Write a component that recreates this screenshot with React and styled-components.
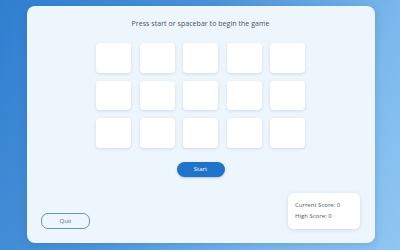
import React from "react";
import styled, { createGlobalStyle } from "styled-components";

const Global = createGlobalStyle`
  html, body { margin: 0; padding: 0; }
  body {
    width: 400px;
    height: 250px;
    overflow: hidden;
    font-family: "Open Sans", "Noto Sans", sans-serif;
    background: linear-gradient(120deg, #2f7fd0 0%, #4c93d8 40%, #7bb8ec 75%, #8fc7f3 100%);
  }
`;

const Page = styled.div`
  width: 400px;
  height: 250px;
  display: flex;
  align-items: flex-start;
  justify-content: center;
  padding-top: 6px;
  padding-left: 2px;
  box-sizing: border-box;
`;

const Card = styled.div`
  width: 348px;
  height: 237px;
  box-sizing: border-box;
  background: #edf5fd;
  border-radius: 8px;
  box-shadow: 0 2px 8px rgba(20, 60, 120, 0.18);
  display: flex;
  flex-direction: column;
  align-items: center;
  padding: 13px 15px 14px 14px;
`;

const Title = styled.div`
  font-size: 7px;
  line-height: 10px;
  color: #4a5361;
  letter-spacing: 0.05px;
`;

const Grid = styled.div`
  margin-top: 14px;
  display: grid;
  grid-template-columns: repeat(5, 35px);
  grid-auto-rows: 29.5px;
  column-gap: 8.5px;
  row-gap: 8px;
`;

const Tile = styled.div`
  background: #ffffff;
  border-radius: 4px;
  box-shadow: 0 1px 3px rgba(40, 70, 110, 0.14);
`;

const StartButton = styled.button`
  margin-top: 14px;
  width: 48px;
  height: 15px;
  border: none;
  border-radius: 8px;
  background: #1f74c9;
  color: #ffffff;
  font-family: inherit;
  font-size: 6px;
  padding: 0;
  box-shadow: 0 1px 2px rgba(20, 60, 120, 0.25);
`;

const Bottom = styled.div`
  margin-top: auto;
  align-self: stretch;
  display: flex;
  justify-content: space-between;
  align-items: flex-end;
`;

const QuitButton = styled.button`
  width: 49px;
  height: 16px;
  border: 1px solid #6d90bd;
  border-radius: 7px;
  background: transparent;
  color: #5d7190;
  font-family: inherit;
  font-size: 6px;
  padding: 0;
  box-sizing: border-box;
`;

const ScoreBox = styled.div`
  width: 72px;
  height: 36px;
  box-sizing: border-box;
  background: #ffffff;
  border-radius: 6px;
  box-shadow: 0 1px 4px rgba(40, 70, 110, 0.14);
  padding: 8px 7px;
  display: flex;
  flex-direction: column;
  gap: 3px;
`;

const ScoreLine = styled.div`
  font-size: 6px;
  line-height: 8px;
  color: #505866;
`;

export default function App() {
  return (
    <>
      <Global />
      <Page>
        <Card>
          <Title>Press start or spacebar to begin the game</Title>
          <Grid>
            {Array.from({ length: 15 }).map((_, i) => (
              <Tile key={i} />
            ))}
          </Grid>
          <StartButton>Start</StartButton>
          <Bottom>
            <QuitButton>Quit</QuitButton>
            <ScoreBox>
              <ScoreLine>Current Score: 0</ScoreLine>
              <ScoreLine>High Score: 0</ScoreLine>
            </ScoreBox>
          </Bottom>
        </Card>
      </Page>
    </>
  );
}
